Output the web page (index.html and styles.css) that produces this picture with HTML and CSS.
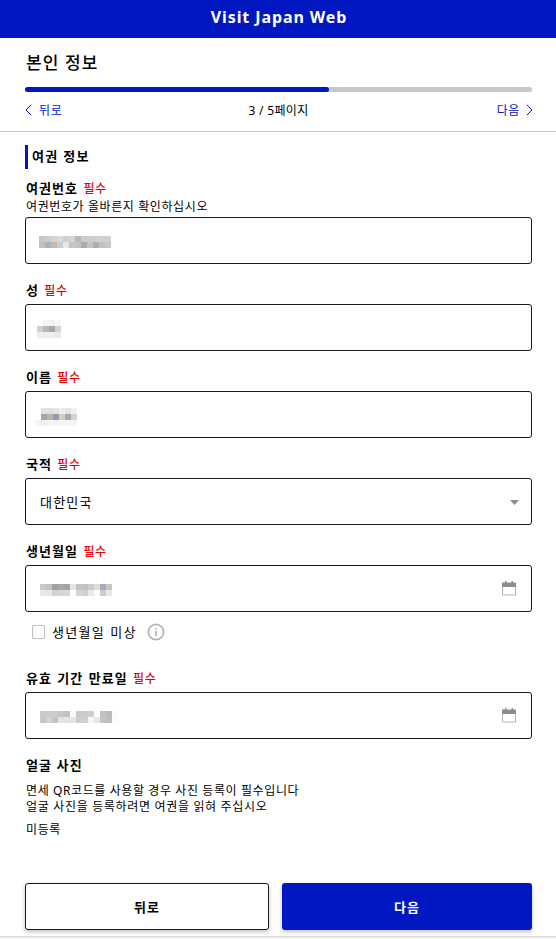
FILE: index.html
```html
<!DOCTYPE html>
<html lang="ko">
<head>
    <meta charset="UTF-8">
    <meta name="viewport" content="width=device-width, initial-scale=1.0">
    <title>Visit Japan Web</title>
    <link rel="stylesheet" href="styles.css">
</head>
<body>
    <header class="site-header">Visit Japan Web</header>

    <div class="page-head">
        <h1>본인 정보</h1>
        <div class="progress"><div class="progress-bar" style="width: 60%;"></div></div>
        <nav class="pager">
            <a href="#" class="pager-link">
                <svg class="chevron" viewBox="0 0 7 12"><path d="M6.2 .8 1 6l5.2 5.2"/></svg>
                <span>뒤로</span>
            </a>
            <span class="pager-count">3 / 5페이지</span>
            <a href="#" class="pager-link next">
                <span>다음</span>
                <svg class="chevron" viewBox="0 0 7 12"><path d="M.8 .8 6 6 .8 11.2"/></svg>
            </a>
        </nav>
    </div>

    <main class="container">
        <h2>여권 정보</h2>

        <form id="passportForm">
            <div class="form-group">
                <label>여권번호 <em>필수</em></label>
                <p class="hint">여권번호가 올바른지 확인하십시오</p>
                <div class="field"><svg class="mask mask-number" id="number"></svg></div>
            </div>
            <div class="form-group">
                <label>성 <em>필수</em></label>
                <div class="field"><svg class="mask mask-surname" id="surname"></svg></div>
            </div>
            <div class="form-group">
                <label>이름 <em>필수</em></label>
                <div class="field"><svg class="mask mask-given" id="given"></svg></div>
            </div>
            <div class="form-group">
                <label>국적 <em>필수</em></label>
                <div class="field">
                    <span class="value">대한민국</span>
                    <svg class="caret" viewBox="0 0 9 5"><path d="M0 0h9L4.5 5z"/></svg>
                </div>
            </div>
            <div class="form-group birth">
                <label>생년월일 <em>필수</em></label>
                <div class="field">
                    <svg class="mask" id="birth"></svg>
                    <svg class="calendar" viewBox="0 0 14 15"><path class="frame" d="M.5 3.500h13v10.500H.5z"/><path class="top" d="M0 1.500h14v4.500H0zM3 0h1.500v3H3zM9.500 0H11v3H9.500z"/></svg>
                </div>
            </div>
            <div class="unknown">
                <span class="checkbox"></span>
                <span class="unknown-text">생년월일 미상</span>
                <svg class="info" viewBox="0 0 18 18"><circle cx="9" cy="9" r="7.700"/><path d="M9 8v5M9 5v1.600"/></svg>
            </div>
            <div class="form-group expiry">
                <label>유효 기간 만료일 <em>필수</em></label>
                <div class="field">
                    <svg class="mask" id="expiry"></svg>
                    <svg class="calendar" viewBox="0 0 14 15"><path class="frame" d="M.5 3.500h13v10.500H.5z"/><path class="top" d="M0 1.500h14v4.500H0zM3 0h1.500v3H3zM9.500 0H11v3H9.500z"/></svg>
                </div>
            </div>

            <section class="photo">
                <h3>얼굴 사진</h3>
                <p>면세 QR코드를 사용할 경우 사진 등록이 필수입니다<br><span class="photo-note">얼굴 사진을 등록하려면 여권을 읽혀 주십시오</span></p>
                <p class="status">미등록</p>
            </section>

            <div class="actions">
                <button type="button" class="btn btn-back">뒤로</button>
                <button type="button" class="btn btn-next">다음</button>
            </div>
        </form>
    </main>
    <footer class="site-footer"></footer>

    <script src="mask.js"></script>
</body>
</html>
```

FILE: styles.css
```css
/* Global Styles */
* {
    box-sizing: border-box;
}

body {
    margin: 0;
    height: 939px;
    display: flex;
    flex-direction: column;
    overflow: hidden;
    font-family: 'Noto Sans', 'Noto Sans CJK KR', sans-serif;
    font-size: 12px;
    letter-spacing: 0.6px;
    color: #000;
    background: #fff;
}

h1, h2, h3, p {
    margin: 0;
}

svg {
    display: block;
    flex: none;
}

.site-header {
    height: 38px;
    flex: none;
    background: #0017c1;
    color: #fff;
    text-align: center;
    font-weight: bold;
    font-size: 16px;
    line-height: 35px;
    letter-spacing: 0.9px;
    padding-left: 2px;
}

/* Title and progress */
.page-head {
    height: 94px;
    flex: none;
    padding: 10px 24px 0 25px;
    border-bottom: 1px solid #c8c8cb;
}

h1 {
    font-size: 17px;
    font-weight: 500;
    line-height: 29px;
    letter-spacing: 1.1px;
    padding-left: 1px;
}

.progress {
    height: 5px;
    margin-top: 10px;
    border-radius: 3px;
    background: #c8c8cb;
}

.progress-bar {
    height: 5px;
    border-radius: 3px;
    background: #0017c1;
}

.pager {
    display: grid;
    grid-template-columns: 1fr auto 1fr;
    align-items: center;
    height: 20px;
    margin-top: 8px;
}

.pager-link {
    display: flex;
    align-items: center;
    gap: 7px;
    color: #0017c1;
    text-decoration: none;
}

.pager-link.next {
    justify-content: flex-end;
    gap: 6px;
}

.pager-count {
    letter-spacing: 0.3px;
}

.chevron {
    width: 7px;
    height: 12px;
    fill: none;
    stroke: #0017c1;
}

.next .chevron {
    margin-right: -1px;
}

/* Form */
.container {
    padding: 13px 24px 0 25px;
    flex: 1;
}

h2 {
    border-left: 3px solid #0017c1;
    height: 24px;
    line-height: 23px;
    padding-left: 4px;
    font-size: 13px;
    font-weight: bold;
    letter-spacing: 1.3px;
}

.form-group {
    height: 87px;
    padding-top: 16px;
}

.form-group:first-child {
    height: 95px;
    padding-top: 9px;
}

.form-group label {
    display: block;
    height: 20px;
    line-height: 20px;
    margin-bottom: 4px;
    padding-left: 1px;
    font-size: 13px;
    font-weight: bold;
    letter-spacing: 1.05px;
    word-spacing: 0.9px;
}

.form-group:first-child label {
    margin-bottom: 1px;
}

.form-group em {
    font-style: normal;
    font-size: 12px;
    font-weight: 500;
    letter-spacing: 0.6px;
    color: #e60000;
}

.hint {
    height: 18px;
    line-height: 15px;
    padding-left: 1px;
}

.field {
    display: flex;
    align-items: center;
    height: 47px;
    padding: 0 15px 0 14px;
    border: 1px solid #1a1a1c;
    border-radius: 3px;
}

.value {
    flex: 1;
    font-size: 13px;
    letter-spacing: 1.2px;
}

.mask {
    width: 78px;
    height: 12px;
    margin-top: 3px;
    shape-rendering: crispEdges;
}

.mask-number {
    margin-left: -1px;
}

.mask-surname {
    height: 18px;
    margin-left: -3px;
}

.mask-given {
    height: 18px;
    margin-top: 4px;
    margin-left: -5px;
}

.caret {
    width: 9px;
    height: 5px;
    margin-top: 1px;
    margin-right: -3px;
    fill: #8c8c8c;
}

.calendar {
    width: 14px;
    height: 15px;
    margin-left: auto;
}

.calendar .frame {
    fill: none;
    stroke: #b3b3b3;
}

.calendar .top {
    fill: #8c8c8c;
}

.unknown {
    display: flex;
    align-items: center;
    height: 40px;
    padding-left: 7px;
    font-size: 13px;
    letter-spacing: 1.3px;
}

.unknown-text {
    padding-bottom: 2px;
    word-spacing: 0.6px;
}

.checkbox {
    width: 13px;
    height: 14px;
    margin-right: 7px;
    border: 1px solid #bdbdbd;
    border-radius: 1px;
}

.info {
    width: 18px;
    height: 18px;
    margin-left: 10px;
    fill: none;
    stroke: #b3b3b3;
    stroke-width: 1.7;
}

/* Face photo */
.photo {
    padding: 16px 0 0 1px;
    height: 144px;
}

h3 {
    font-size: 13px;
    line-height: 20px;
    letter-spacing: 1.1px;
    margin-bottom: 8px;
}

.photo p {
    line-height: 16px;
}

.photo .photo-note {
    letter-spacing: 0.67px;
}

.photo .status {
    margin-top: 7px;
}

/* Buttons */
.actions {
    display: flex;
    gap: 13px;
}

.btn {
    width: 250px;
    height: 47px;
    padding: 0;
    border: none;
    border-radius: 3px;
    font-family: inherit;
    font-size: 13px;
    font-weight: 600;
    letter-spacing: 1px;
    box-shadow: 0 2px 4px rgba(0, 0, 0, 0.25);
}

.btn-back {
    width: 244px;
    background: #fff;
    border: 1px solid #1a1a1c;
    color: #000;
}

.btn-next {
    background: #0017c1;
    color: #fff;
}

.site-footer {
    height: 3px;
    flex: none;
    border-top: 1px solid #d9d9d9;
    background: #f1f1f1;
}
```

FILE: mask.js
```js
// hidden values are drawn as 6px blocks, one array per row
const masks = {
    number: [
        ["#c5c5c7", "#cbcbcf", "#dccfc5", "#d6dce0", "#d0cfd3", "#d5d5d6", "#b6b8bb", "#cbcbca", "#d3cdc6", "#cfd0d2", "#ccd0d3", "#d0cfd4"],
        ["#c0c0bb", "#adb1bb", "#c5baa9", "#c6ced8", "#e8e8e8", "#c3c5c9", "#c0c4c6", "#aaaaab", "#c4c5c2", "#aeafb2", "#c4bfbc", "#c5c8cc"]
    ],
    surname: [
        ["#fefefc", "#f4f4f6", "#f1f1f2", "#f7f7f8"],
        ["#d7cec8", "#aeb9c0", "#a5a8a3", "#d2d2d6"],
        ["#ededee", "#eeeeec", "#eeeeec", "#e7e7ec"]
    ],
    given: [
        ["#fff", "#e1e2e4", "#e0e0e1", "#e4e5e5", "#efeee9", "#e2e2e8", "#f1f1f3"],
        ["#fff", "#a6a7ab", "#bdb3a9", "#969da7", "#d2d0bd", "#aaa5b4", "#d2d3d7"],
        ["#f4f4f4", "#edf0f2", "#f6f7f5", "#f1f2f5", "#f6f6f3", "#f4f4f4", "#f5f5f5"]
    ],
    birth: [
        ["#c9c9cb", "#c5bfbd", "#a29f9f", "#aea6a6", "#9da5a8", "#e5e5e6", "#c8c2bd", "#c5c1bd", "#cbcecd", "#e3dcd1", "#a6abb8", "#c7c5c8"],
        ["#eaeaeb", "#e7e6e4", "#d3d2d2", "#d7d6d6", "#d8d9df", "#fff", "#d8d4d5", "#cdd0d2", "#e4eaed", "#fefaf5", "#caccd5", "#e9e9ea"]
    ],
    expiry: [
        ["#d0c9c2", "#cacbd1", "#cbcbce", "#c7c7c8", "#bfc2c3", "#fafafa", "#cec8c4", "#cbcbcc", "#cccfd1", "#fffffc", "#c2c3c9", "#bababb", "#f8fcff"],
        ["#cac4c1", "#d4d4d5", "#c4c4c7", "#dfe1e6", "#e5e4e4", "#e5e4e4", "#d0cdcb", "#d4cece", "#f5f6f7", "#e7e6e4", "#bec4ca", "#bebec2", "#f8fcff"]
    ]
};

for (const id in masks) {
    const svg = document.getElementById(id);
    masks[id].forEach((row, y) => {
        row.forEach((color, x) => {
            const rect = document.createElementNS("http://www.w3.org/2000/svg", "rect");
            rect.setAttribute("x", x * 6);
            rect.setAttribute("y", y * 6);
            rect.setAttribute("width", 6);
            rect.setAttribute("height", 6);
            rect.setAttribute("fill", color);
            svg.appendChild(rect);
        });
    });
}
```
